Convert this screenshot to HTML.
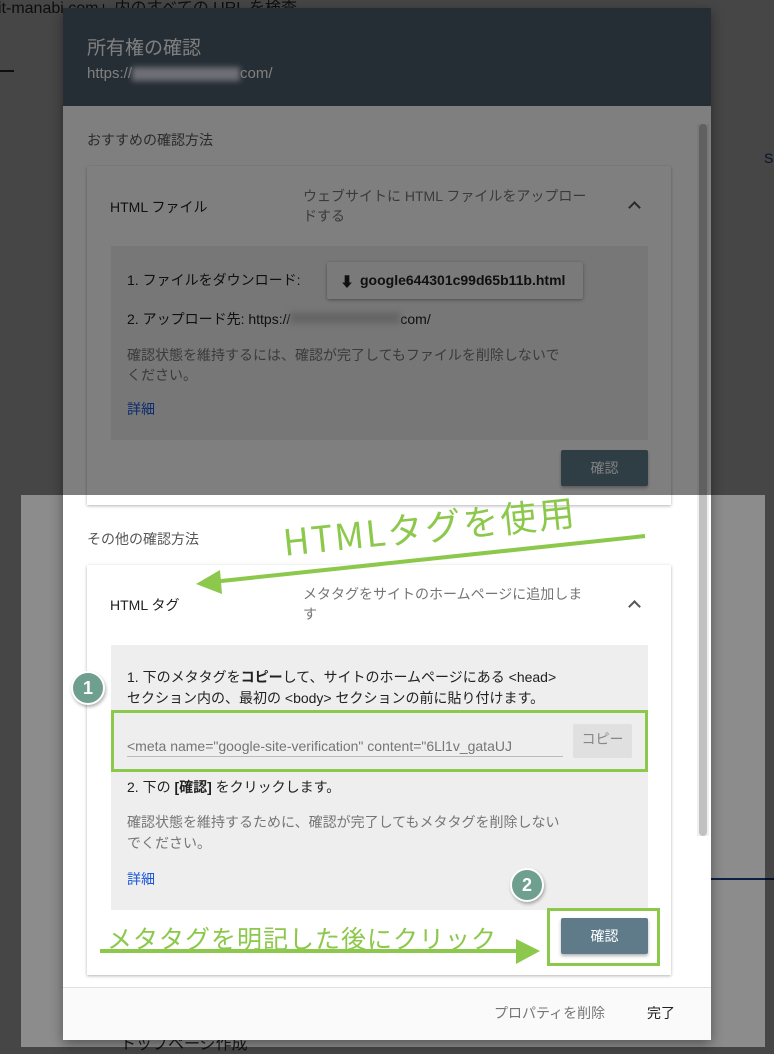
<!DOCTYPE html>
<html><head><meta charset="utf-8"><style>
*{margin:0;padding:0;box-sizing:border-box}
body{width:774px;height:1054px;position:relative;overflow:hidden;background:#fff;font-family:"Liberation Sans","Noto Sans CJK JP",sans-serif;color:#212121}
.a{position:absolute;white-space:nowrap}
.dim{position:absolute;background:rgba(0,0,0,.5)}
.card{position:absolute;left:87px;width:584px;background:#fff;box-shadow:0 1px 3px rgba(0,0,0,.3)}
.box{position:absolute;left:111px;width:537px;background:#eee}
.btn{position:absolute;background:#5f7b8a;color:#fff;font-size:14px;text-align:center;line-height:36px;border-radius:2px;box-shadow:0 2px 3px rgba(0,0,0,.3)}
.g{color:#757575}
.chev{position:absolute;width:9px;height:9px;border-left:2px solid #555;border-top:2px solid #555;transform:rotate(45deg)}
.circ{position:absolute;width:34px;height:34px;border-radius:50%;background:#6fa08f;border:2px solid #fff;box-shadow:1px 2px 3px rgba(0,0,0,.3);color:#fff;font-weight:bold;font-size:18px;text-align:center;line-height:30px}
.hw{color:#8cc84b;font-family:"WenQuanYi Zen Hei","Noto Sans CJK JP",sans-serif}
</style></head><body>
<div class="a" style="left:-2px;top:-6px;font-size:16px;color:#333">it-manabi.com」内のすべての URL を検査</div>
<div class="a" style="left:0;top:70px;width:14px;height:2px;background:#333"></div>
<div class="a" style="left:764px;top:150px;font-size:14px;color:#1a4c9c">S</div>
<div class="a" style="left:710px;top:878px;width:64px;height:2px;background:#1a3c7c"></div>
<div class="a" style="left:120px;top:1030px;font-size:16px;color:#333">トップページ作成</div>
<!-- scrim -->
<div class="a" style="left:0;top:0;width:774px;height:1054px;background:rgba(0,0,0,.45)"></div>
<!-- dialog -->
<div class="a" style="left:63px;top:8px;width:648px;height:1032px;background:#fff;box-shadow:0 4px 12px rgba(0,0,0,.4);overflow:hidden">
 <div class="a" style="left:0;top:0;width:648px;height:98px;background:#4c5c6a"></div>
 <div class="a" style="left:24px;top:25px;font-size:19px;color:#fff">所有権の確認</div>
 <div class="a" style="left:24px;top:57px;font-size:15px;color:#fff">https://<span style="display:inline-block;width:108px;height:14px;background:#dde;filter:blur(3px);vertical-align:middle"></span>com/</div>
 <div class="a" style="left:634px;top:116px;width:12px;height:712px;background:#f0f0f0"></div>
 <div class="a" style="left:636px;top:116px;width:8px;height:712px;background:#c1c1c1;border-radius:4px"></div>
 <div class="a" style="left:0;top:979px;width:648px;height:53px;background:#fafafa;border-top:1px solid #e0e0e0"></div>
 <div class="a" style="left:431px;top:995px;font-size:14px;color:#757575">プロパティを削除</div>
 <div class="a" style="left:584px;top:995px;font-size:14px;color:#212121">完了</div>
</div>
<div class="a" style="left:87px;top:130px;font-size:14px;color:#555">おすすめの確認方法</div>
<div class="card" style="top:166px;height:339px"></div>
<div class="a" style="left:110px;top:197px;font-size:14px">HTML ファイル</div>
<div class="a g" style="left:303px;top:186px;font-size:14px;line-height:20px">ウェブサイトに HTML ファイルをアップロー<br>ドする</div>
<div class="chev" style="left:630px;top:203px"></div>
<div class="box" style="top:246px;height:194px"></div>
<div class="a" style="left:127px;top:270px;font-size:14px">1. ファイルをダウンロード:</div>
<div class="a" style="left:327px;top:262px;width:256px;height:37px;background:#f5f5f5;box-shadow:0 1px 3px rgba(0,0,0,.35);border-radius:2px;font-size:14px;font-weight:bold;line-height:37px;padding-left:33px">google644301c99d65b11b.html</div>
<div class="a" style="left:340px;top:272px;font-size:14px;font-weight:bold">⬇</div>
<div class="a" style="left:127px;top:309px;font-size:14px">2. アップロード先: https://<span style="display:inline-block;width:110px;height:12px;background:#ccc;filter:blur(3px)"></span>com/</div>
<div class="a g" style="left:127px;top:345px;font-size:14px;line-height:20px">確認状態を維持するには、確認が完了してもファイルを削除しないで<br>ください。</div>
<div class="a" style="left:127px;top:399px;font-size:14px;color:#1a56db">詳細</div>
<div class="btn" style="left:561px;top:450px;width:87px">確認</div>

<div class="a" style="left:87px;top:529px;font-size:14px;color:#555">その他の確認方法</div>
<div class="card" style="top:565px;height:410px"></div>
<div class="a" style="left:110px;top:595px;font-size:14px">HTML タグ</div>
<div class="a g" style="left:303px;top:584px;font-size:14px;line-height:20px">メタタグをサイトのホームページに追加しま<br>す</div>
<div class="chev" style="left:630px;top:602px"></div>
<div class="box" style="top:645px;height:265px"></div>
<div class="a" style="left:127px;top:667px;font-size:14px;line-height:21px">1. 下のメタタグを<b>コピー</b>して、サイトのホームページにある &lt;head&gt;<br>セクション内の、最初の &lt;body&gt; セクションの前に貼り付けます。</div>
<div class="a g" style="left:127px;top:738px;width:436px;font-size:14px;overflow:hidden;border-bottom:1px solid #bbb;padding-bottom:2px">&lt;meta name="google-site-verification" content="6Ll1v_gataUJ</div>
<div class="a" style="left:573px;top:724px;width:59px;height:34px;background:#e0e0e0;border-radius:2px;font-size:14px;color:#888;text-align:center;line-height:30px">コピー</div>
<div class="a" style="left:111px;top:710px;width:537px;height:62px;border:3px solid #8cc84b"></div>
<div class="a" style="left:127px;top:777px;font-size:14px">2. 下の <b>[確認]</b> をクリックします。</div>
<div class="a g" style="left:127px;top:812px;font-size:14px;line-height:21px">確認状態を維持するために、確認が完了してもメタタグを削除しない<br>でください。</div>
<div class="a" style="left:127px;top:869px;font-size:14px;color:#1a56db">詳細</div>
<div class="btn" style="left:561px;top:918px;width:87px">確認</div>
<div class="a" style="left:547px;top:908px;width:113px;height:58px;border:3px solid #8cc84b"></div>
<div class="circ" style="left:71px;top:671px">1</div>
<div class="circ" style="left:510px;top:868px">2</div>
<!-- annotations -->
<svg class="a" style="left:0;top:0" width="774" height="1054">
<line x1="645" y1="536" x2="212" y2="582" stroke="#8cc84b" stroke-width="4"/>
<polygon points="196,584 220,570 222,594" fill="#8cc84b"/>
<line x1="100" y1="951" x2="520" y2="951" stroke="#8cc84b" stroke-width="4"/>
<polygon points="540,951 516,939 516,964" fill="#8cc84b"/>
</svg>
<div class="a hw" style="left:283px;top:515px;font-size:36px;transform:rotate(-6deg);transform-origin:left center;letter-spacing:2px">HTMLタグを使用</div>
<div class="a hw" style="left:107px;top:920px;font-size:25px;letter-spacing:1px">メタタグを明記した後にクリック</div>
<!-- dim outside highlight -->
<div class="dim" style="left:0;top:0;width:774px;height:495px"></div>
<div class="dim" style="left:0;top:495px;width:21px;height:559px"></div>
<div class="dim" style="left:765px;top:495px;width:9px;height:559px"></div>
<div class="dim" style="left:21px;top:1047px;width:744px;height:7px"></div>
</body></html>
